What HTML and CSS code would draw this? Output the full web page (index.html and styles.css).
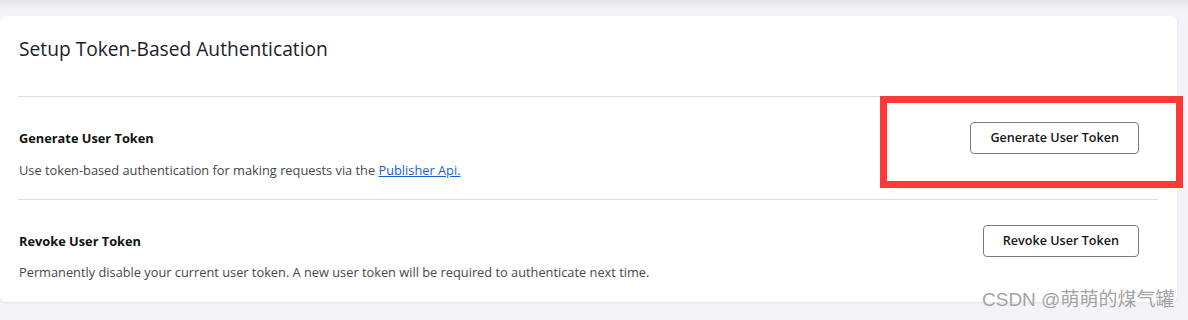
FILE: index.html
```html
<!DOCTYPE html>
<html>
<head>
<meta charset="utf-8">
<link rel="stylesheet" href="styles.css">
</head>
<body>
<main class="page">
  <section class="card">
    <header class="card-header">
      <h1 class="card-title">Setup Token-Based Authentication</h1>
    </header>
    <div class="setting">
      <div class="setting-row">
        <h2 class="setting-title">Generate User Token</h2>
        <button class="btn">Generate User Token</button>
      </div>
      <p class="setting-desc">Use token-based authentication for making requests via the <a class="link" href="#">Publisher Api.</a></p>
    </div>
    <div class="setting setting-last">
      <div class="setting-row">
        <h2 class="setting-title">Revoke User Token</h2>
        <button class="btn">Revoke User Token</button>
      </div>
      <p class="setting-desc">Permanently disable your current user token. A new user token will be required to authenticate next time.</p>
    </div>
  </section>
</main>
<div class="highlight"></div>
<div class="watermark">CSDN @萌萌的煤气罐</div>
</body>
</html>
```

FILE: styles.css
```css
* { box-sizing: border-box; }
html, body { margin: 0; padding: 0; }
body {
  width: 1188px;
  height: 320px;
  overflow: hidden;
  position: relative;
  font-family: "Open Sans", "Noto Sans", sans-serif;
  background: linear-gradient(to bottom, #e4e4ea 0px, #f1f1f6 9px, #f3f3f8 14px);
}
.page {
  padding: 16px 11px 0 0;
}
.card {
  background: #ffffff;
  border-radius: 6px;
  box-shadow: 0 1px 3px rgba(40, 40, 70, 0.08);
  height: 286px;
}
.card-header {
  height: 81px;
  margin-left: 18px;
  padding: 19px 0 0 1px;
  border-bottom: 1px solid #dcdce8;
}
.card-title {
  margin: 0;
  font-size: 19.2px;
  line-height: 28px;
  font-weight: 400;
  color: #1c1c2a;
}
.setting {
  margin: 0 19px 0 18px;
  padding: 25px 19px 20px 1px;
  border-bottom: 1px solid #dcdce4;
}
.setting-last {
  border-bottom: none;
  padding-top: 25px;
}
.setting-row {
  display: flex;
  align-items: center;
  justify-content: space-between;
  height: 32px;
}
.setting-title {
  margin: 0;
  font-size: 12.8px;
  line-height: 18px;
  font-weight: 700;
  color: #111111;
}
.setting-desc {
  margin: 7px 0 0;
  font-size: 12.8px;
  line-height: 18px;
  color: #474747;
}
.setting-last .setting-desc { margin-top: 6px; }
.link {
  color: #1a5fd2;
  text-decoration: underline;
}
.btn {
  font-family: "Open Sans", "Noto Sans", sans-serif;
  font-size: 12.6px;
  font-weight: 600;
  color: #161616;
  background: #ffffff;
  border: 1px solid #7a7a7a;
  border-radius: 4px;
  height: 32px;
  padding: 0 19px;
  line-height: 30px;
}
.highlight {
  position: absolute;
  left: 880px;
  top: 96px;
  width: 303px;
  height: 92px;
  border: 7px solid #fc3a3a;
}
.watermark {
  position: absolute;
  left: 982px;
  top: 287px;
  font-family: "Liberation Sans", "Noto Sans CJK SC", sans-serif;
  font-size: 19px;
  line-height: 26px;
  color: #a3a3a3;
  text-shadow: 0 0 1px #ffffff;
  white-space: nowrap;
}
```
